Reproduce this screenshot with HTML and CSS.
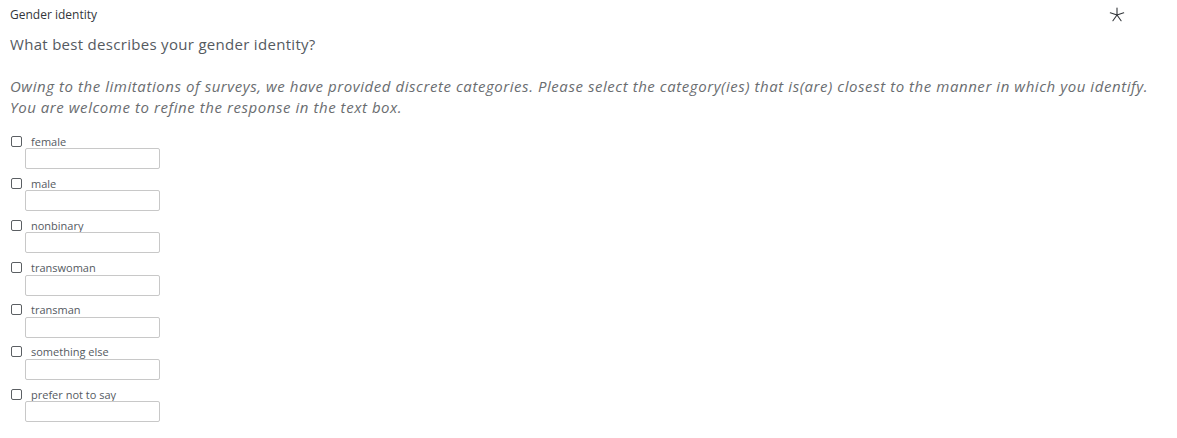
FILE: index.html
```html
<!DOCTYPE html>
<html>
<head>
<meta charset="utf-8">
<link rel="stylesheet" href="styles.css">
</head>
<body>
<div class="page">
  <div class="header">
    <div class="title">Gender identity</div>
    <svg class="req" width="16" height="16" viewBox="0 0 16 16">
      <g stroke="#32363a" stroke-width="1.1" fill="none" stroke-linecap="round">
        <line x1="8" y1="8" x2="8" y2="1"/>
        <line x1="8" y1="8" x2="14.7" y2="5.8"/>
        <line x1="8" y1="8" x2="12.1" y2="13.7"/>
        <line x1="8" y1="8" x2="3.9" y2="13.7"/>
        <line x1="8" y1="8" x2="1.3" y2="5.8"/>
      </g>
    </svg>
  </div>
  <div class="question">What best describes your gender identity?</div>
  <div class="note"><span class="line">Owing to the limitations of surveys, we have provided discrete categories. Please select the category(ies) that is(are) closest to the manner in which you identify.</span><span class="line">You are welcome to refine the response in the text box.</span></div>
  <div class="options">
    <div class="option"><label class="row"><span class="box"></span><span class="lbl">female</span></label><input class="txt" type="text"></div>
    <div class="option"><label class="row"><span class="box"></span><span class="lbl">male</span></label><input class="txt" type="text"></div>
    <div class="option"><label class="row"><span class="box"></span><span class="lbl">nonbinary</span></label><input class="txt" type="text"></div>
    <div class="option"><label class="row"><span class="box"></span><span class="lbl">transwoman</span></label><input class="txt" type="text"></div>
    <div class="option"><label class="row"><span class="box"></span><span class="lbl">transman</span></label><input class="txt" type="text"></div>
    <div class="option"><label class="row"><span class="box"></span><span class="lbl">something else</span></label><input class="txt" type="text"></div>
    <div class="option"><label class="row"><span class="box"></span><span class="lbl">prefer not to say</span></label><input class="txt" type="text"></div>
  </div>
</div>
</body>
</html>
```
FILE: styles.css
```css
html, body {
  margin: 0;
  padding: 0;
  background: #ffffff;
}
body {
  font-family: "Open Sans", "Noto Sans", sans-serif;
  color: #32363a;
}
.page {
  padding: 7px 10px 0 10px;
}
.header {
  display: flex;
  justify-content: space-between;
  align-items: flex-start;
  height: 20px;
}
.title {
  font-size: 12px;
  line-height: 16px;
  color: #32363a;
}
.req {
  margin-right: 42px;
}
.question {
  margin-top: 7px;
  font-size: 15px;
  line-height: 20px;
  letter-spacing: 0.3px;
  color: #555a5f;
}
.note {
  margin-top: 22px;
  font-size: 15px;
  line-height: 21px;
  font-style: italic;
  letter-spacing: 0.56px;
  color: #6a6d70;
  white-space: nowrap;
}
.line {
  display: block;
}
.options {
  margin-top: 16px;
  display: flex;
  flex-direction: column;
  gap: 4.2px;
}
.option {
  display: flex;
  flex-direction: column;
  height: 38px;
}
.row {
  display: flex;
  align-items: center;
  height: 14px;
}
.box {
  width: 9px;
  height: 9px;
  border: 1px solid #5b5f63;
  border-radius: 2px;
  margin-left: 1px;
  box-sizing: content-box;
}
.lbl {
  margin-left: 9px;
  font-size: 11px;
  color: #555a5f;
}
.txt {
  margin: 0 0 0 15px;
  width: 135px;
  height: 21px;
  box-sizing: border-box;
  border: 1px solid #c8c8c8;
  border-radius: 2px;
  padding: 0;
  background: #fff;
}
```
